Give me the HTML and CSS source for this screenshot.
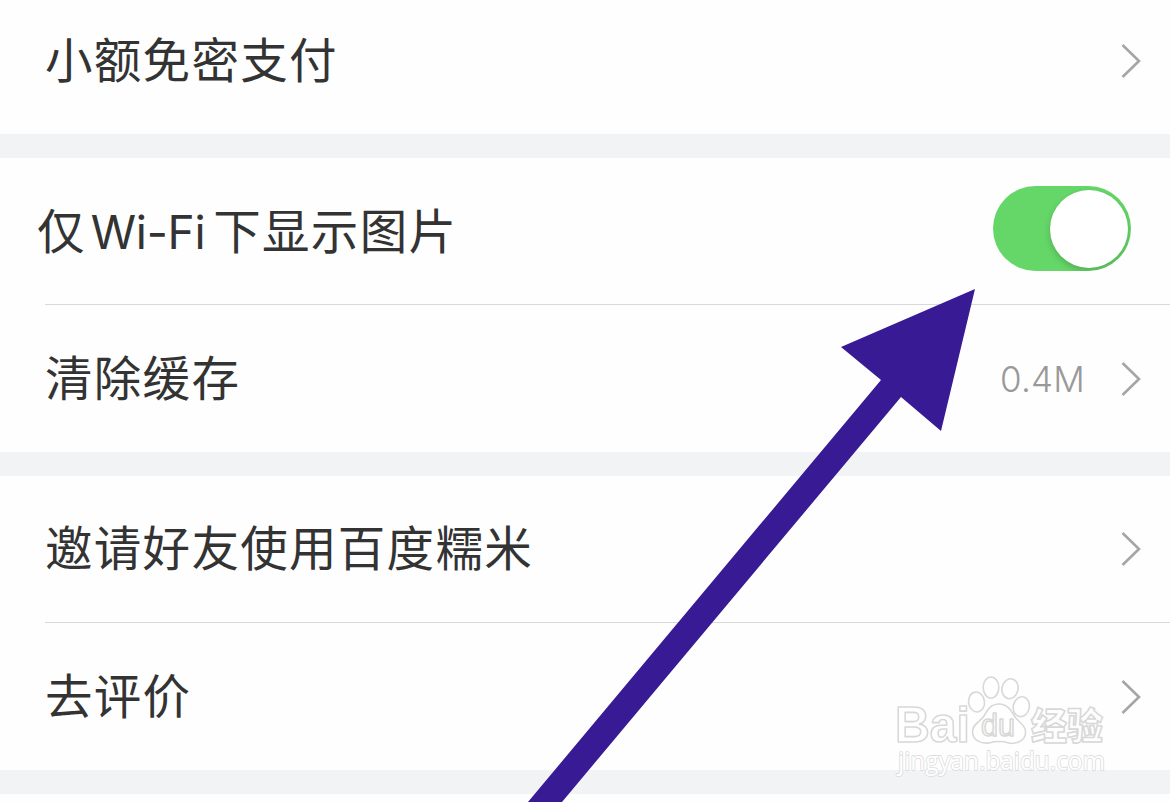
FILE: index.html
```html
<!DOCTYPE html>
<html lang="zh-CN">
<head>
<meta charset="UTF-8" />
<meta name="viewport" content="width=device-width, initial-scale=1" />
<title>设置</title>
<link rel="stylesheet" href="styles.css">
</head>
<body>
<main class="settings">
  <section class="group group-first">
    <a class="row">
      <span class="label">小额免密支付</span>
      <svg class="chevron" viewBox="0 0 22 36"><path d="M2.500 2 L19 18 L2.500 34" /></svg>
    </a>
  </section>

  <section class="group">
    <div class="row row-wifi">
      <span class="label">仅<span class="latin">Wi-Fi</span>下显示图片</span>
      <span class="switch" role="switch" aria-checked="true"><span class="knob"></span></span>
    </div>
    <a class="row">
      <span class="label">清除缓存</span>
      <span class="value">0.4M</span>
      <svg class="chevron" viewBox="0 0 22 36"><path d="M2.500 2 L19 18 L2.500 34" /></svg>
    </a>
  </section>

  <section class="group">
    <a class="row">
      <span class="label">邀请好友使用百度糯米</span>
      <svg class="chevron" viewBox="0 0 22 36"><path d="M2.500 2 L19 18 L2.500 34" /></svg>
    </a>
    <a class="row">
      <span class="label">去评价</span>
      <svg class="chevron" viewBox="0 0 22 36"><path d="M2.500 2 L19 18 L2.500 34" /></svg>
    </a>
  </section>

  <section class="group group-last"></section>
</main>

<svg class="arrow" viewBox="0 0 1170 802">
  <polygon points="975,289 841,347 881,380 528,802 562,802 901,397 941,431" />
</svg>

<svg class="watermark" viewBox="0 0 220 116">
  <text class="wm-logo" x="15" y="66" textLength="75" lengthAdjust="spacingAndGlyphs">Bai</text>
  <g class="wm-paw">
    <ellipse cx="96.500" cy="26" rx="8" ry="10" transform="rotate(-8 96.500 26)" />
    <ellipse cx="111" cy="11.500" rx="7.800" ry="10.500" />
    <ellipse cx="130" cy="12.700" rx="8" ry="10" transform="rotate(12 130 12.700)" />
    <ellipse cx="141.300" cy="30.700" rx="8" ry="10" transform="rotate(12 141.300 30.700)" />
    <path d="M119 28 C127 28 131 34 135 41 C140 47 146 50 145.500 57 C145 65 137 68 129 67 C122 65 116 65 109 67 C101 68 92.500 64 92.500 56 C92.500 48 100 46 104 40 C108 33 111 28 119 28 Z" />
  </g>
  <text class="wm-du" x="101" y="60" textLength="34" lengthAdjust="spacingAndGlyphs">du</text>
  <text class="wm-cn" x="151" y="63.500" textLength="72" lengthAdjust="spacingAndGlyphs">经验</text>
  <text class="wm-url" x="18" y="94" textLength="207" lengthAdjust="spacingAndGlyphs">jingyan.baidu.com</text>
</svg>
</body>
</html>
```
FILE: styles.css
```css
* {
  box-sizing: border-box;
}
body {
  margin: 0;
  height: 802px;
  position: relative;
  overflow: hidden;
  background: #f2f3f5;
  color: #333;
  font-family: "Noto Sans CJK SC", sans-serif;
}

/* List */
.settings {
  display: flex;
  flex-direction: column;
  gap: 24px;
  height: 802px;
  overflow: hidden;
}
.group {
  flex: none;
  background: #fefefe;
}
.group-first {
  height: 134px;
  display: flex;
  flex-direction: column;
  justify-content: flex-end;
}
.group-last {
  height: 8px;
}
.row {
  display: flex;
  align-items: center;
  flex: none;
  height: 147px;
  margin-left: 45px;
  padding-right: 28px;
}
.row + .row {
  border-top: 1px solid #d9d9db;
  height: 148px;
}
.row:first-child:not(:last-child) {
  height: 146px;
}
.row-wifi {
  padding-right: 39px;
}
.label {
  flex: 1;
  padding-bottom: 6px;
  font-size: 47.5px;
  line-height: 70px;
  letter-spacing: 1.3px;
  white-space: nowrap;
}
.row-wifi .label {
  margin-left: -8px;
  padding-bottom: 2px;
}
.latin {
  font-family: Inter, sans-serif;
  font-size: 46px;
  letter-spacing: -0.3px;
  margin: 0 8px 0 5px;
}
.value {
  margin-right: 35px;
  font-family: Inter, sans-serif;
  font-size: 35px;
  font-weight: 300;
  letter-spacing: 0.2px;
  color: #999;
}
.chevron {
  width: 22px;
  height: 36px;
  fill: none;
  stroke: #a5a5a5;
  stroke-width: 2.6;
}

/* Switch */
.switch {
  display: flex;
  justify-content: flex-end;
  align-items: center;
  width: 138px;
  height: 85px;
  margin-top: -5px;
  padding: 3px;
  border-radius: 43px;
  background: #65d668;
  overflow: hidden;
}
.knob {
  width: 78px;
  height: 78px;
  border-radius: 50%;
  background: #fff;
  box-shadow: 0 3px 6px rgba(0, 0, 0, 0.18);
}

/* Pointer drawn over the list */
.arrow {
  position: absolute;
  top: 0;
  left: 0;
  width: 1170px;
  height: 802px;
  fill: #371a94;
}

.watermark {
  position: absolute;
  left: 880px;
  top: 676px;
  width: 220px;
  height: 116px;
  overflow: visible;
  fill: rgba(255, 255, 255, 0.8);
  stroke: #d8d8d8;
  stroke-width: 1.6;
  stroke-linejoin: round;
  font-family: "Liberation Sans", sans-serif;
}
.wm-logo {
  font-size: 50px;
  font-weight: 700;
}
.wm-du {
  font-size: 31px;
}
.wm-cn {
  font-family: "Noto Sans CJK SC", sans-serif;
  font-size: 37px;
  font-weight: 900;
}
.wm-url {
  font-family: "Open Sans", sans-serif;
  font-size: 25px;
  stroke: #dedede;
  stroke-width: 1.8;
  paint-order: stroke;
  fill: #fff;
}
```
